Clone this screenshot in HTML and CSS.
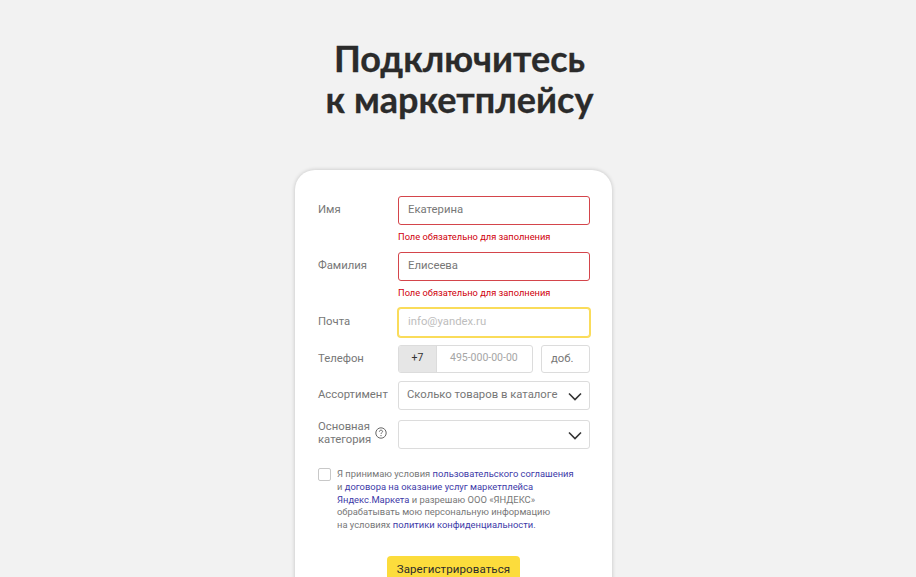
FILE: index.html
```html
<!DOCTYPE html>
<html>
<head>
    <meta charset="UTF-8">
    <title>Подключитесь к маркетплейсу</title>
    <link rel="stylesheet" href="styles.css">
</head>
<body>
    <h1 class="title">Подключитесь<br>к маркетплейсу</h1>
    <form class="card">
        <div class="row">
            <label class="label">Имя</label>
            <div class="field">
                <div class="input input_error">Екатерина</div>
                <div class="error">Поле обязательно для заполнения</div>
            </div>
        </div>
        <div class="row">
            <label class="label">Фамилия</label>
            <div class="field">
                <div class="input input_error">Елисеева</div>
                <div class="error">Поле обязательно для заполнения</div>
            </div>
        </div>
        <div class="row row_mail">
            <label class="label">Почта</label>
            <div class="input input_focus placeholder">info@yandex.ru</div>
        </div>
        <div class="row row_phone">
            <label class="label">Телефон</label>
            <div class="phone">
                <div class="phone_box">
                    <span class="phone_code">+7</span>
                    <span class="phone_num">495-000-00-00</span>
                </div>
                <div class="phone_ext">доб.</div>
            </div>
        </div>
        <div class="row row_select">
            <label class="label">Ассортимент</label>
            <div class="input select">
                <span>Сколько товаров в каталоге</span>
                <svg class="chevron" viewBox="0 0 14 9"><path d="M1 1.5l6 6 6-6"/></svg>
            </div>
        </div>
        <div class="row row_select2">
            <label class="label label_two">Основная<br>категория
                <svg class="help" viewBox="0 0 12 12"><circle cx="6" cy="6" r="5.2"/><path d="M4.4 4.7c0-1 .7-1.5 1.6-1.5s1.6.5 1.6 1.3c0 1.2-1.6 1.2-1.6 2.4"/><circle class="help_dot" cx="6" cy="8.6" r=".7"/></svg>
            </label>
            <div class="input select">
                <span></span>
                <svg class="chevron" viewBox="0 0 14 9"><path d="M1 1.5l6 6 6-6"/></svg>
            </div>
        </div>
        <div class="agree">
            <span class="checkbox"></span>
            <p class="agree_text">Я принимаю условия <a href="#">пользовательского соглашения</a><br>и <a href="#">договора на оказание услуг маркетплейса</a><br><a href="#">Яндекс.Маркета</a> и разрешаю ООО «ЯНДЕКС»<br>обрабатывать мою персональную информацию<br>на условиях <a href="#">политики конфиденциальности.</a></p>
        </div>
        <div class="submit_wrap">
            <button type="button" class="submit">Зарегистрироваться</button>
        </div>
    </form>
</body>
</html>
```

FILE: styles.css
```css
* {
    margin:0;
    padding:0;
    box-sizing: border-box;
}
html, body {
    height: 577px;
    overflow: hidden;
}
body {
    background-color: #f2f2f2;
    font-family: "Roboto", "Noto Sans", sans-serif;
    color: #2b2b2b;
    padding-top: 38px;
}
a {
    text-decoration: none;
    color: #3d3aa8;
}
.title {
    width: 916px;
    padding-left: 3px;
    text-align: center;
    font-family: "Lato", sans-serif;
    font-size: 36px;
    line-height: 41px;
    font-weight: 700;
    -webkit-text-stroke: 0.3px #2b2b2b;
    color: #2b2b2b;
}
.card {
    width: 317px;
    height: 460px;
    margin: 50px 0 0 295px;
    padding: 26px 22px 0 23px;
    background-color: #fff;
    border-radius: 20px;
    box-shadow: 0 0 4px rgba(0,0,0,0.2);
}
.row {
    display: grid;
    grid-template-columns: 80px 192px;
    align-items: start;
}
.label {
    font-size: 11.3px;
    line-height: 14px;
    color: #777;
    padding-top: 7px;
}
.input {
    height: 29px;
    padding: 0 9px;
    border: 1px solid #dcdcdc;
    border-radius: 3px;
    font-size: 11.3px;
    line-height: 25px;
    color: #777;
    background-color: #fff;
}
.input_error {
    border-color: #d4454b;
}
.input_focus {
    border-color: #fadc5a;
    box-shadow: 0 0 0 1px #fadc5a;
    line-height: 25px;
}
.placeholder {
    color: #bdbdbd;
}
.error {
    height: 27px;
    padding-top: 6px;
    font-size: 9.3px;
    line-height: 12px;
    color: #d0000c;
}
.row_phone {
    margin-top: 8px;
}
.phone {
    display: flex;
    justify-content: space-between;
}
.phone_box {
    display: flex;
    width: 135px;
    height: 28px;
    border: 1px solid #dcdcdc;
    border-radius: 3px;
    overflow: hidden;
    font-size: 10.5px;
    line-height: 24px;
}
.phone_code {
    width: 38px;
    text-align: center;
    background-color: #e6e6e6;
    border-right: 1px solid #dcdcdc;
    color: #333;
}
.phone_num {
    flex: 1;
    padding-left: 13px;
    color: #a5a5a5;
}
.phone_ext {
    width: 49px;
    height: 28px;
    padding-left: 9px;
    border: 1px solid #dcdcdc;
    border-radius: 3px;
    font-size: 11.3px;
    line-height: 25px;
    color: #777;
}
.row_select {
    margin-top: 8px;
}
.row_select2 {
    margin-top: 10px;
}
.select {
    display: flex;
    justify-content: space-between;
    align-items: center;
    padding-left: 8px;
    padding-right: 7px;
    padding-bottom: 2px;
    line-height: 14px;
    white-space: nowrap;
}
.chevron {
    width: 14px;
    height: 9px;
    margin-top: 3px;
    fill: none;
    stroke: #333;
    stroke-width: 1.6;
}
.label_two {
    position: relative;
    padding-top: 0;
    line-height: 13px;
}
.help {
    position: absolute;
    left: 57px;
    top: 7px;
    width: 12px;
    height: 12px;
    fill: none;
    stroke: #666;
    stroke-width: 1;
}
.help_dot {
    fill: #666;
    stroke: none;
}
.agree {
    display: flex;
    margin-top: 19px;
}
.checkbox {
    flex: none;
    width: 13px;
    height: 13px;
    margin-right: 6px;
    border: 1px solid #c8c8c8;
    border-radius: 2px;
}
.agree_text {
    font-size: 9.4px;
    line-height: 12.75px;
    color: #777;
    white-space: nowrap;
}
.submit_wrap {
    margin-top: 24px;
    padding-left: 69px;
}
.submit {
    width: 133px;
    height: 26px;
    border: 0;
    border-radius: 4px;
    background-color: #fcdc3c;
    font-family: "Roboto", "Noto Sans", sans-serif;
    font-size: 11.5px;
    letter-spacing: 0.1px;
    color: #2b2b2b;
}
```
